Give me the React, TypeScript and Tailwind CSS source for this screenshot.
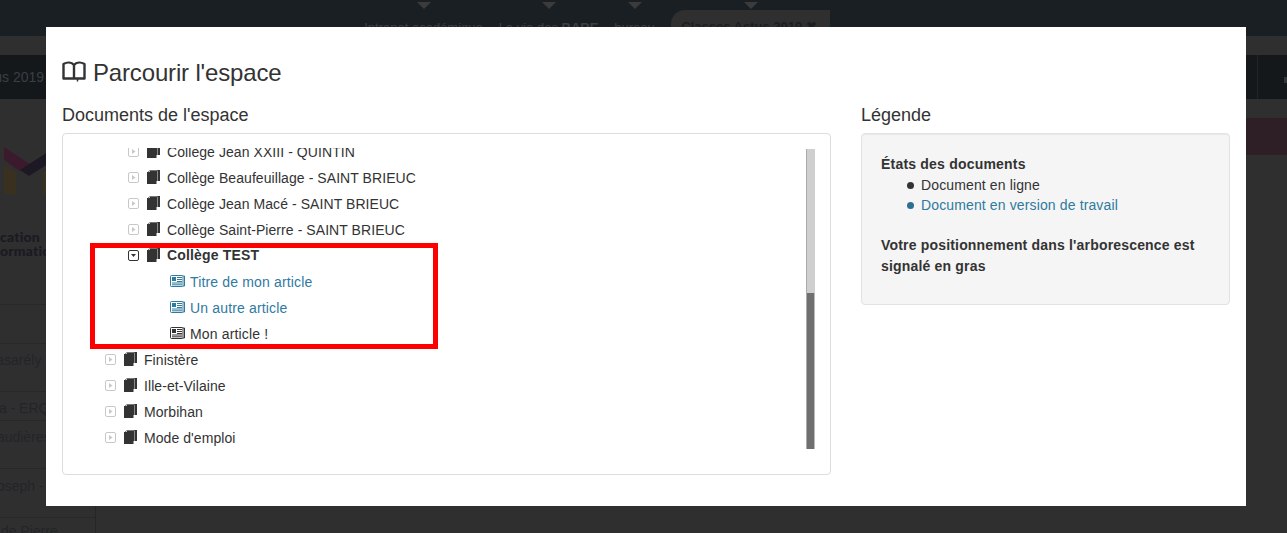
const sans = { fontFamily: '"Liberation Sans", Arial, sans-serif' };

const linkBlue = "#2f7a9f";

const navItems = [
  { label: "Intranet académique", w: "w-[117px]" },
  { label: "La vie des", bold: "BARE", w: "w-[99px]" },
  { label: "bureau", w: "w-[39px]" },
];

const sideRows = [
  { text: "", h: "h-[39px]", ml: "ml-0", pt: "pt-[6px]" },
  { text: "Vasarély", h: "h-[48px]", ml: "-ml-[12px]", pt: "pt-[6px]" },
  { text: "Ia - ERQ", h: "h-[29px]", ml: "-ml-[5px]", pt: "pt-[6px]" },
  { text: "Gaudières", h: "h-[48px]", ml: "-ml-[14px]", pt: "pt-[6px]" },
  { text: "Joseph -", h: "h-[49px]", ml: "-ml-[10px]", pt: "pt-[7px]" },
  { text: "s de Pierre", h: "h-[20px]", ml: "-ml-[10px]", pt: "pt-[3px]" },
];

function Triangle() {
  return <div className="mt-[2px] h-0 w-0 border-x-[7px] border-t-[7px] border-x-transparent border-t-[#3b3b3b]" />;
}

function Logo() {
  return (
    <svg width="60" height="52" viewBox="0 0 60 52" className="ml-[4px]">
      <path d="M0 2 L27 20 L16 26 L0 15 Z" fill="#3a1a2c" />
      <path d="M16 25 L50 3 L50 15 L25 31 Z" fill="#1c1824" />
      <path d="M0 20 L12 27 L12 49 L0 49 Z" fill="#3a3020" />
      <path d="M39 27 L50 21 L50 49 L39 49 Z" fill="#3a3020" />
    </svg>
  );
}

function Toggle({ open }: { open?: boolean }) {
  const c = open ? "#333333" : "#c8c8c8";
  return (
    <svg width="11" height="11" viewBox="0 0 11 11" className="shrink-0">
      <rect x="0.5" y="0.5" width="10" height="10" rx="1.5" fill="none" stroke={c} />
      {open ? <path d="M3 4 L8 4 L5.5 7 Z" fill={c} /> : <path d="M4 3 L7.5 5.5 L4 8 Z" fill={c} />}
    </svg>
  );
}

function BookIcon() {
  return (
    <svg width="13" height="14" viewBox="0 0 13 14" className="shrink-0">
      <path d="M3 0 L13 0 L13 11 L3 11 Z" fill="#333333" />
      <rect x="0" y="2" width="9.5" height="12" fill="#333333" />
      <path d="M1 2 L3 0.5 L10.5 0.5" stroke="#777777" strokeWidth="1" fill="none" />
      <path d="M10.5 1 L10.5 11" stroke="#8a8a8a" strokeWidth="1" />
    </svg>
  );
}

function ArticleIcon({ color }: { color: string }) {
  return (
    <svg width="15" height="12" viewBox="0 0 15 12" className="shrink-0">
      <rect x="0.5" y="0.5" width="12.5" height="11" rx="1" fill="#ffffff" stroke={color} />
      <path d="M13 1 L14.5 1 L14.5 11 L13 11" fill="none" stroke={color} />
      <rect x="2" y="2" width="4" height="4" fill={color} />
      <path d="M7 2.5 H12 M7 4.5 H12 M7 6.5 H12 M2 8 H12 M2 9.8 H12" stroke={color} strokeWidth="1" />
    </svg>
  );
}

function Folder({ label, pad, open, bold }: { label: string; pad: string; open?: boolean; bold?: boolean }) {
  return (
    <div className={`flex h-[26px] items-center ${pad}`}>
      <Toggle open={open} />
      <div className="ml-[8px] mr-[7px]">
        <BookIcon />
      </div>
      <span className={bold ? "font-bold tracking-[0.17px]" : "mt-[2px] tracking-[0.07px]"}>{label}</span>
    </div>
  );
}

function Article({ label, color }: { label: string; color: string }) {
  return (
    <div className="flex h-[26px] items-center pl-[107px]" style={{ color }}>
      <ArticleIcon color={color} />
      <span className="ml-[5px] mt-[2px] tracking-[0.16px]">{label}</span>
    </div>
  );
}

function BookOpenTitle() {
  return (
    <svg width="24" height="21" viewBox="0 0 24 21" className="mb-[2px] mr-[7px] shrink-0" fill="none" stroke="#333333">
      <path
        d="M1.5 17.5 L1.5 3 C5 1 9.5 1 12 4 C14.5 1 19 1 22.5 3 L22.5 17.5 Z M12 4 L12 17"
        strokeWidth="2.4"
        strokeLinejoin="round"
      />
      <path d="M15.5 18 L15.5 20.5" strokeWidth="1.5" />
    </svg>
  );
}

export default function App() {
  return (
    <div className="relative h-[533px] w-full overflow-hidden bg-[#2f2f2f] text-[14px] text-[#333333]" style={sans}>
      {/* page behind the modal, dimmed */}
      <header className="flex h-[36px] gap-[17px] bg-[#1a1f24] pl-[365px] text-[13px] text-[#3b4045]">
        {navItems.map((item) => (
          <div key={item.label} className={`flex flex-col items-center ${item.w}`}>
            <Triangle />
            <span className="mt-[9px] whitespace-nowrap">
              {item.label} {item.bold && <b>{item.bold}</b>}
            </span>
          </div>
        ))}
        <div className="flex w-[159px] flex-col items-center">
          <Triangle />
          <div className="mt-[1px] flex h-[26px] w-full items-center justify-center whitespace-nowrap rounded-tl-[14px] bg-[#2f2f2f] pr-[3px] pt-[8px] font-bold text-[#1a1f24]">
            Classes Actus 2019 ✖
          </div>
        </div>
      </header>
      <div className="mt-[19px] flex h-[44px] items-center justify-between bg-[#14181b] text-[#3a3f44]">
        <span className="-ml-[26px] mt-[1px] text-[14px]">Actus 2019</span>
        <div className="flex h-full w-[30px] items-center justify-end border-l border-[#202428]">
          <div className="mt-[6px] h-[6px] w-[3px] bg-[#33363a]" />
        </div>
      </div>
      <div className="flex">
        <aside className="h-[434px] w-[96px] shrink-0 border-r border-[#262626]">
          <div className="pt-[46px]">
            <Logo />
          </div>
          <div
            className="mt-[33px] h-[74px] text-[14px] font-black leading-[14px] tracking-[0.2px] text-[#1b1922]"
            style={{ fontFamily: "Lato, sans-serif" }}
          >
            <div>cation</div>
            <div className="whitespace-nowrap">ormation</div>
          </div>
          {sideRows.map((row, i) => (
            <div key={i} className={`${row.h} ${row.pt} overflow-hidden border-t border-[#282828] text-[#222528]`}>
              <div className={`whitespace-nowrap ${row.ml}`}>{row.text}</div>
            </div>
          ))}
        </aside>
        <div className="flex-1 pt-[19px]">
          <div className="h-[37px] bg-[#2d1f25]" />
        </div>
      </div>

      {/* modal */}
      <div className="absolute left-[46px] top-[27px] h-[479px] w-[1200px] bg-white px-[16px] pt-[32px]">
        <h3 className="flex h-[26px] items-center text-[24px] font-normal leading-[26px] tracking-[-0.16px]">
          <BookOpenTitle />
          <span className="mt-[2px]">Parcourir l'espace</span>
        </h3>
        <div className="mt-[20px] grid grid-cols-[769px_369px] gap-x-[30px]">
          <section>
            <h4 className="mb-[8px] text-[18px] font-normal leading-[20px]">Documents de l'espace</h4>
            <div className="relative flex h-[342px] items-start rounded-[4px] border border-[#dddddd] pr-[15px] pt-[14px]">
              <div className="h-[302px] flex-1 overflow-hidden">
                <div className="-mt-[10px]">
                  <Folder label="Collège Jean XXIII - QUINTIN" pad="pl-[65px]" />
                  <Folder label="Collège Beaufeuillage - SAINT BRIEUC" pad="pl-[65px]" />
                  <Folder label="Collège Jean Macé - SAINT BRIEUC" pad="pl-[65px]" />
                  <Folder label="Collège Saint-Pierre - SAINT BRIEUC" pad="pl-[65px]" />
                  <Folder label="Collège TEST" pad="pl-[65px]" open bold />
                  <Article label="Titre de mon article" color={linkBlue} />
                  <Article label="Un autre article" color={linkBlue} />
                  <Article label="Mon article !" color="#333333" />
                  <Folder label="Finistère" pad="pl-[42px]" />
                  <Folder label="Ille-et-Vilaine" pad="pl-[42px]" />
                  <Folder label="Morbihan" pad="pl-[42px]" />
                  <Folder label="Mode d'emploi" pad="pl-[42px]" />
                </div>
              </div>
              <div className="mt-[1px] flex h-[300px] w-[9px] flex-col border-l border-[#aaaaaa] bg-[#cfcfcf]">
                <div className="h-[144px]" />
                <div className="flex-1 border-r border-[#bbbbbb] bg-[#6f6f6f]" />
              </div>
              {/* red highlight drawn over the tree */}
              <div className="pointer-events-none absolute left-[27px] top-[109px] h-[106px] w-[348px] border-[5px] border-[#ff0000]" />
            </div>
          </section>
          <section>
            <h4 className="mb-[8px] text-[18px] font-normal leading-[20px]">Légende</h4>
            <div className="rounded-[4px] border border-[#e3e3e3] bg-[#f5f5f5] px-[19px] pb-[19px] pt-[20px] shadow-[inset_0_1px_1px_rgba(0,0,0,0.05)]">
              <p className="font-bold leading-[20px] tracking-[0.2px]">États des documents</p>
              <ul className="mb-[20px] mt-[1px] pl-[26px] leading-[20px] tracking-[0.13px]">
                <li className="flex items-center gap-[7px]">
                  <span className="h-[7px] w-[7px] rounded-full bg-[#333333]" />
                  Document en ligne
                </li>
                <li className="flex items-center gap-[7px]" style={{ color: linkBlue }}>
                  <span className="h-[7px] w-[7px] rounded-full bg-[#2c6f8f]" />
                  Document en version de travail
                </li>
              </ul>
              <p className="mb-[8px] font-bold leading-[21px] tracking-[0.18px]">
                Votre positionnement dans l'arborescence est signalé en gras
              </p>
            </div>
          </section>
        </div>
      </div>
    </div>
  );
}
